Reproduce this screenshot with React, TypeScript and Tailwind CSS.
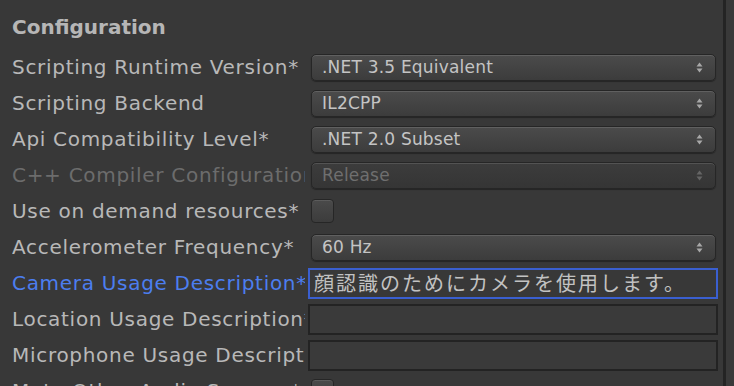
import React from 'react';

type Row =
  | { kind: 'popup'; label: string; value: string; disabled?: boolean }
  | { kind: 'check'; label: string }
  | { kind: 'text'; label: string; value: string; focused?: boolean };

const rows: Row[] = [
  { kind: 'popup', label: 'Scripting Runtime Version*', value: '.NET 3.5 Equivalent' },
  { kind: 'popup', label: 'Scripting Backend', value: 'IL2CPP' },
  { kind: 'popup', label: 'Api Compatibility Level*', value: '.NET 2.0 Subset' },
  { kind: 'popup', label: 'C++ Compiler Configuration', value: 'Release', disabled: true },
  { kind: 'check', label: 'Use on demand resources*' },
  { kind: 'popup', label: 'Accelerometer Frequency*', value: '60 Hz' },
  { kind: 'text', label: 'Camera Usage Description*', value: '顔認識のためにカメラを使用します。', focused: true },
  { kind: 'text', label: 'Location Usage Description*', value: '' },
  { kind: 'text', label: 'Microphone Usage Description*', value: '' },
  { kind: 'check', label: 'Mute Other Audio Sources*' },
];

const Arrows = ({ dim }: { dim?: boolean }) => (
  <svg width="7" height="11" viewBox="0 0 7 11" className={dim ? 'opacity-40' : ''}>
    <path d="M3.5 0.5 L6.5 4.5 L0.5 4.5 Z" fill="#a8a8a8" />
    <path d="M3.5 10.5 L6.5 6.5 L0.5 6.5 Z" fill="#a8a8a8" />
  </svg>
);

const Popup = ({ value, disabled }: { value: string; disabled?: boolean }) => (
  <div
    className={`h-[27px] flex items-center justify-between pl-[10px] pr-[12px] rounded-[5px] border border-[#262626] bg-gradient-to-b shadow-[inset_0_1px_0_rgba(255,255,255,0.12),0_1px_1px_rgba(0,0,0,0.35)] ${
      disabled ? 'from-[#3c3c3c] to-[#353535]' : 'from-[#4b4b4b] to-[#3c3c3c]'
    }`}
  >
    <span className={`text-[17px] leading-[22px] tracking-[0.2px] ${disabled ? 'text-[#6f6f6f]' : 'text-[#c4c4c4]'}`}>{value}</span>
    <Arrows dim={disabled} />
  </div>
);

const App: React.FC = () => {
  return (
    <div
      className="w-[734px] h-[386px] overflow-hidden bg-[#383838] flex"
      style={{ fontFamily: '"DejaVu Sans", "Noto Sans CJK JP", sans-serif' }}
    >
      <div className="w-[723px] shrink-0">
        <div className="h-[49px] pl-3 pt-[13px]">
          <h2 className="text-[20px] font-bold text-[#b6b6b6] leading-[28px]">Configuration</h2>
        </div>
        {rows.map((row, i) => (
          <div key={i} className="h-[36px] flex items-center">
            <div
              className={`w-[293px] ml-3 shrink-0 overflow-hidden whitespace-nowrap text-[20px] leading-[26px] tracking-[0.7px] ${
                row.kind === 'text' && row.focused
                  ? 'text-[#4c7ef0]'
                  : row.kind === 'popup' && row.disabled
                  ? 'text-[#6c6c6c]'
                  : 'text-[#b8b8b8]'
              }`}
            >
              {row.label}
            </div>
            {row.kind === 'popup' && (
              <div className="flex-1 pl-[6px] pr-[7px]">
                <Popup value={row.value} disabled={row.disabled} />
              </div>
            )}
            {row.kind === 'check' && (
              <div className="flex-1 pl-[6px]">
                <div className="w-[23px] h-[24px] rounded-[4px] border border-[#262626] bg-gradient-to-b from-[#4a4a4a] to-[#3c3c3c] shadow-[inset_0_1px_0_rgba(255,255,255,0.1)]" />
              </div>
            )}
            {row.kind === 'text' && (
              <div className="flex-1 pl-[3px] pr-[5px]">
                <div
                  className={`h-[31px] flex items-center pl-[4px] border-2 ${
                    row.focused ? 'border-[#3a5fd0] bg-[#383838]' : 'border-[#232323] bg-[#3a3a3a]'
                  }`}
                >
                  <span
                    className="text-[20px] leading-[26px] text-[#c2c2c2] whitespace-nowrap tracking-[2px]"
                    style={{ fontFamily: '"Noto Sans CJK JP", sans-serif' }}
                  >
                    {row.value}
                  </span>
                </div>
              </div>
            )}
          </div>
        ))}
      </div>
      <div className="w-[3px] h-full bg-[#242424]" />
      <div className="flex-1 bg-[#393939]" />
    </div>
  );
};

export default App;
